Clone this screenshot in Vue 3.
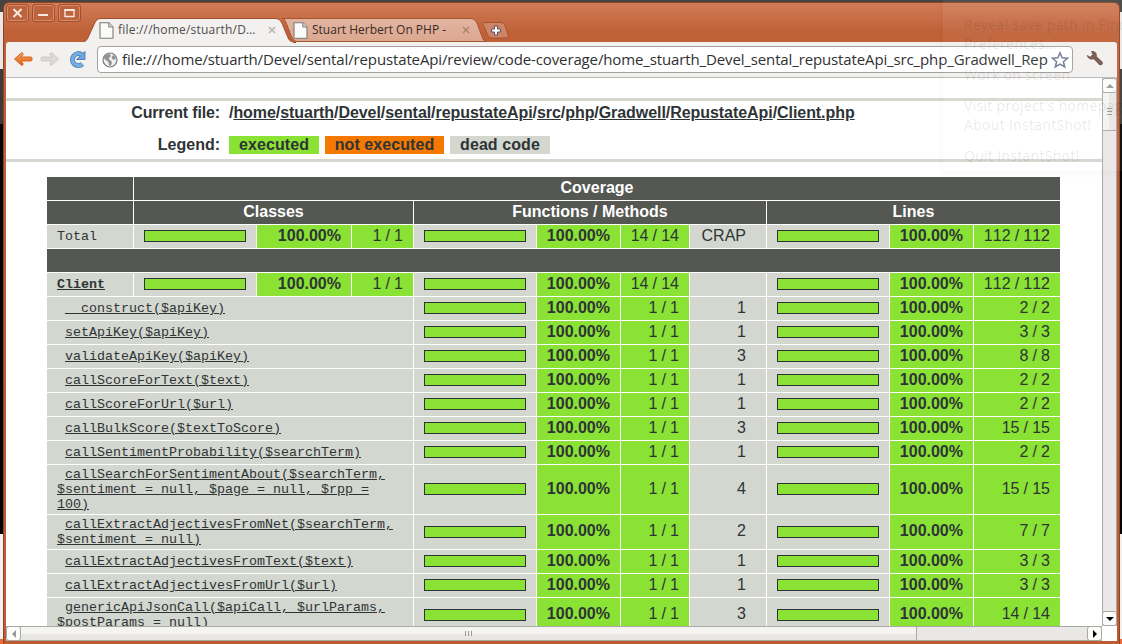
<script setup>
const pct = '100.00%'
const files = ['home', 'stuarth', 'Devel', 'sental', 'repustateApi', 'src', 'php', 'Gradwell', 'RepustateApi', 'Client.php']
const totals = [
  { name: 'Total', link: false, crap: 'CRAP' },
  { name: 'Client', link: true, crap: '' },
]
const methods = [
  { name: '__construct($apiKey)', crap: 1, lines: '2 / 2' },
  { name: 'setApiKey($apiKey)', crap: 1, lines: '3 / 3' },
  { name: 'validateApiKey($apiKey)', crap: 3, lines: '8 / 8' },
  { name: 'callScoreForText($text)', crap: 1, lines: '2 / 2' },
  { name: 'callScoreForUrl($url)', crap: 1, lines: '2 / 2' },
  { name: 'callBulkScore($textToScore)', crap: 3, lines: '15 / 15' },
  { name: 'callSentimentProbability($searchTerm)', crap: 1, lines: '2 / 2' },
  { name: 'callSearchForSentimentAbout($searchTerm,\n$sentiment = null, $page = null, $rpp =\n100)', crap: 4, lines: '15 / 15', size: 'three' },
  { name: 'callExtractAdjectivesFromNet($searchTerm,\n$sentiment = null)', crap: 2, lines: '7 / 7', size: 'two' },
  { name: 'callExtractAdjectivesFromText($text)', crap: 1, lines: '3 / 3' },
  { name: 'callExtractAdjectivesFromUrl($url)', crap: 1, lines: '3 / 3' },
  { name: 'genericApiJsonCall($apiCall, $urlParams,\n$postParams = null)', crap: 3, lines: '14 / 14', size: 'two' },
]
const raised = (m) => ({ raised: m.size === 'two' })
</script>

<template>
  <div class="desktop">
    <div class="window">
      <header class="titlebar">
        <div class="winbtns">
          <span class="wb"><svg width="21" height="16" viewBox="0 0 21 16"><path d="M6.500 4l8 8M14.500 4l-8 8" stroke="#f7e6dc" stroke-width="2" fill="none" /></svg></span>
          <span class="wb"><svg width="21" height="16" viewBox="0 0 21 16"><path d="M5 10h10" stroke="#f7e6dc" stroke-width="2" fill="none" /></svg></span>
          <span class="wb"><svg width="21" height="16" viewBox="0 0 21 16"><path d="M6 5h9v6.500H6z" stroke="#f7e6dc" stroke-width="1.400" fill="none" /><path d="M5.500 5h10" stroke="#f7e6dc" stroke-width="2" /></svg></span>
        </div>
        <svg class="tabshapes" width="440" height="26" viewBox="80 17 440 26">
          <defs><linearGradient id="it" x1="0" y1="0" x2="0" y2="1"><stop offset="0" stop-color="#e2b5a1" /><stop offset="1" stop-color="#dca78f" /></linearGradient></defs>
          <path d="M281 18.500H469c4 0 6 2 7.500 6l4.500 12c1 3 2.500 5 4 5H297c-4 0-5-2-7-6l-5-13c-1-2.500-2-4-4-4z" fill="url(#it)" stroke="#a4552f" />
          <path d="M484 22.500h16c2 0 3.500 1 4 3l3 9c.6 2-.5 3.500-2.500 3.500h-13c-2.500 0-4-1-5-3.500l-4-9c-.7-1.800 0-3 1.500-3z" fill="#cd8566" stroke="#a35331" />
          <path d="M493.500 26h3v3h3v3h-3v3h-3v-3h-3v-3h3z" fill="#fff" stroke="#595064" />
          <path d="M80 42.500c4 0 6-2 8-7l5-11c2-4.500 4-6 7-6h173c5 0 7 2 8.500 6l5 12c1.500 4 3.500 6 8.500 6z" fill="#f2f1ef" stroke="#9c4e2c" />
          <path d="M80 42h212v1H80z" fill="#f2f1ef" />
        </svg>
        <div class="tab first">
          <svg width="15" height="17" viewBox="0 0 15 17"><path d="M1 .8h9l4 4.200v11.200H1z" fill="#fbfbfa" stroke="#7c7c79" stroke-width="1.100" /><path d="M9.800.8V5H14" fill="#ddd" stroke="#7c7c79" /></svg>
          <span class="ttl">file:///home/stuarth/D…</span>
          <svg class="x" width="8" height="8" viewBox="0 0 8 8"><path d="M1 1l6 6M7 1L1 7" stroke="#b5b4b2" stroke-width="1.500" /></svg>
        </div>
        <div class="tab second">
          <svg width="15" height="17" viewBox="0 0 15 17"><path d="M1 .8h9l4 4.200v11.200H1z" fill="#fbfbfa" stroke="#7c7c79" stroke-width="1.100" /><path d="M9.800.8V5H14" fill="#ddd" stroke="#7c7c79" /></svg>
          <span class="ttl">Stuart Herbert On PHP -</span>
          <svg class="x" width="8" height="8" viewBox="0 0 8 8"><path d="M1 1l6 6M7 1L1 7" stroke="#b08570" stroke-width="1.500" /></svg>
        </div>
      </header>

      <div class="toolbar">
        <svg class="nav" width="84" height="20" viewBox="12 49 84 20">
          <defs><linearGradient id="og" x1="0" y1="0" x2="0" y2="1"><stop offset="0" stop-color="#f5a45c" /><stop offset="1" stop-color="#df5f16" /></linearGradient></defs>
          <path d="M14.500 59l7-6.300c1 0 2 .8 1.500 1.800l-2 2.500h10c1.500 0 1.500 4 0 4H21l2 2.500c.5 1-.5 2-1.500 1.800z" fill="url(#og)" stroke="#d5661f" />
          <path d="M58.500 59l-7-6.300c-1 0-2 .8-1.500 1.800l2 2.500H42c-1.500 0-1.500 4 0 4h10l-2 2.500c-.5 1 .5 2 1.500 1.800z" fill="#dcdad6" stroke="#cbc9c5" />
          <path d="M82 54.800A6 6 0 1 0 82.500 64" fill="none" stroke="#4c84bd" stroke-width="5" />
          <path d="M85 51.500v8h-8.500z" fill="#6ca6dc" stroke="#4c84bd" />
          <path d="M82 54.800A6 6 0 1 0 82.500 64" fill="none" stroke="#75ade1" stroke-width="3.200" />
        </svg>
        <div class="omnibox">
          <svg class="globe" width="16" height="16" viewBox="0 0 16 16"><circle cx="8" cy="8" r="7" fill="#f1f1f0" stroke="#777" stroke-width="1.200" /><path d="M3 3.500L7.500 1.800 9 4 6.500 6.500 8 8l2 2-1.200 4-2-1L6.500 10 3 7.500 1.800 6z M10.500 3.500l2 .2 1.500 3-2.500 1.300-2-2z" fill="#929292" /></svg>
          <span class="url">file:///home/stuarth/Devel/sental/repustateApi/review/code-coverage/home_stuarth_Devel_sental_repustateApi_src_php_Gradwell_Rep</span>
          <svg class="star" width="18" height="18" viewBox="0 0 18 18"><path d="M9 1.800l2.100 5 5.400.4-4.100 3.500 1.300 5.300L9 13.100 4.300 16l1.300-5.300-4.100-3.500 5.400-.4z" fill="#fff" stroke="#727a94" stroke-width="1.500" /></svg>
        </div>
        <svg class="wrench" width="18" height="18" viewBox="0 0 18 18"><path d="M5 1.200C8 .3 11.500 2.500 10.800 6.400l5.700 5.400c1.300 2-.9 4.500-3.200 3.200L7.800 9.300C4.500 10.500 1 8.200.8 4.800l3.200 2 2.500-2.300z" fill="#75574b" /></svg>
      </div>

      <div class="view">
        <div class="page">
          <section class="info">
            <div class="line"><b class="lab">Current file:</b><b class="path"><template v-for="f in files" :key="f">/<a>{{ f }}</a></template></b></div>
            <div class="line second-line"><b class="lab">Legend:</b><b class="chip exec">executed</b><b class="chip not">not executed</b><b class="chip dead">dead code</b></div>
          </section>

          <div class="grid">
            <div class="h"></div><div class="h c10">Coverage</div>
            <div class="h"></div><div class="h c3">Classes</div><div class="h c4">Functions / Methods</div><div class="h c3">Lines</div>
            <template v-for="(t, i) in totals" :key="t.name">
              <div class="n"><a v-if="t.link" class="strong">{{ t.name }}</a><template v-else>{{ t.name }}</template></div>
              <div class="b"><i></i></div><div class="p">{{ pct }}</div><div class="r">1 / 1</div>
              <div class="b"><i></i></div><div class="p">{{ pct }}</div><div class="r">14 / 14</div><div class="c">{{ t.crap }}</div>
              <div class="b"><i></i></div><div class="p">{{ pct }}</div><div class="r">112 / 112</div>
              <div v-if="i === 0" class="h c11"></div>
            </template>
            <template v-for="m in methods" :key="m.name">
              <div class="n c4" :class="m.size"><span class="m"><a>{{ m.name }}</a></span></div>
              <div class="b"><i></i></div><div class="p" :class="raised(m)">{{ pct }}</div><div class="r" :class="raised(m)">1 / 1</div><div class="c" :class="raised(m)">{{ m.crap }}</div>
              <div class="b"><i></i></div><div class="p" :class="raised(m)">{{ pct }}</div><div class="r" :class="raised(m)">{{ m.lines }}</div>
            </template>
          </div>
        </div>

        <div class="vbar">
          <span class="btn"><svg width="8" height="4"><path d="M0 4l4-4 4 4z" fill="#999" /></svg></span>
          <span class="vthumb"><i></i><i></i><i></i></span>
          <span class="btn end"><svg width="8" height="4"><path d="M0 0h8L4 4z" fill="#000" /></svg></span>
        </div>
        <div class="hbar">
          <span class="btn"><svg width="4" height="8"><path d="M4 0v8L0 4z" fill="#999" /></svg></span>
          <span class="hthumb"><i></i><i></i><i></i></span>
          <span class="btn end"><svg width="4" height="8"><path d="M0 0v8l4-4z" fill="#000" /></svg></span>
        </div>
      </div>
    </div>

    <div class="ghost">
      <span>Reveal save path in Finder</span>
      <span>Preferences...</span>
      <span class="g1">Work on screen</span>
      <span class="g1">Visit project's homepage</span>
      <span>About InstantShot!</span>
      <span class="g1">Quit InstantShot!</span>
    </div>
  </div>
</template>

<style>
html, body { margin: 0; overflow: hidden; background: #3c3b37; }
</style>

<style scoped>
* { box-sizing: border-box; }
.desktop { position: relative; width: 1122px; height: 644px; padding: 2px 2px 0 3px; overflow: hidden; background: linear-gradient(#454441 0 12px, #e9e8e6 12px 69px, #3c3b37 69px 124px, #050505 124px 534px, #f2f0ee 534px 639px, #ec6b3b 639px); font-family: "Liberation Sans", Arial, sans-serif; color: #2e3436; }
.window { display: flex; flex-direction: column; width: 1117px; height: 642px; padding: 0 2px 3px 3px; border: 1px solid #8b4426; border-width: 1px 1px 0; border-radius: 6px 6px 0 0; background: linear-gradient(#d07c57, #bf6037 30px, #bd5c33); }
.titlebar { position: relative; display: flex; height: 39px; flex: none; }
.winbtns { display: flex; gap: 3px; margin: 1px 0 0 -1px; height: 18px; }
.wb { display: flex; width: 23px; height: 18px; border: 1px solid #a74f2b; border-radius: 3px; background: #bd633d; box-shadow: inset 0 0 0 1px #d58c6b; }
.tabshapes { position: absolute; left: 74px; top: 14px; }
.tab { position: absolute; top: 18px; height: 18px; display: flex; align-items: center; font-family: "Open Sans", sans-serif; font-size: 12px; color: #4c4c4c; }
.first { left: 92px; width: 177px; }
.first .ttl { letter-spacing: .2px; }
.second { left: 286px; width: 177px; color: #3a2a24; }
.ttl { margin-left: 4px; white-space: nowrap; line-height: 18px; }
.x { margin-left: auto; }
.toolbar { display: flex; height: 36px; flex: none; background: #f2f1ef; border-bottom: 1px solid #b9b8b6; padding: 4px 0 0 6px; margin-left: -1px; border-radius: 3px 3px 0 0; }
.nav { margin-top: 3px; flex: none; }
.omnibox { display: flex; align-items: center; width: 976px; height: 27px; margin-left: 1px; border: 1px solid #a3a19e; border-radius: 4px; background: #fff; padding: 0 2px 0 4px; flex: none; }
.globe { flex: none; }
.url { font-family: "Open Sans", sans-serif; font-size: 15px; line-height: 20px; letter-spacing: -.13px; margin: -1px 0 0 4px; white-space: nowrap; width: 929px; flex: none; color: #303030; }
.star { flex: none; }
.wrench { margin: 4px 0 0 13px; }
.view { display: grid; grid-template: minmax(0, 1fr) 15px / minmax(0, 1fr) 15px; flex: 1; min-height: 0; margin-left: -1px; background: #fff; }
.page { overflow: hidden; padding-top: 20px; }
.info { height: 64px; border: 3px solid #d3d7cf; border-width: 3px 0; padding-top: 3px; font-size: 16px; line-height: 17px; }
.line { display: flex; height: 18px; letter-spacing: -.06px; }
.second-line { margin-top: 14px; letter-spacing: 0; }
.lab { width: 214px; margin-right: 9px; text-align: right; }
.line:first-child .lab { letter-spacing: -.15px; }
a { text-decoration: underline; }
.chip { height: 18px; text-align: center; margin-right: 6px; letter-spacing: .08px; }
.exec { width: 90px; background: #8ae234; }
.not { width: 119px; background: #f57900; }
.dead { width: 100px; background: #d3d7cf; }
.grid { display: grid; grid-template-columns: 86px 122px 94px 61px 122px 83px 68px 76px 122px 83px 86px; grid-auto-rows: min-content; gap: 1px; width: 1013px; margin: 15px 0 0 41px; font-size: 16px; line-height: 21px; }
.grid > div { min-height: 23px; }
.grid > .two { min-height: 34px; }
.grid > .three { min-height: 49px; }
.h { background: #555753; color: #fff; font-weight: bold; text-align: center; }
.c3 { grid-column: span 3; }
.c4 { grid-column: span 4; }
.c10 { grid-column: span 10; }
.c11 { grid-column: span 11; }
.n { background: #d3d7cf; display: flex; align-items: center; padding: 0 10px; font: 13.333px/15px "Liberation Mono", monospace; white-space: pre; }
.m { text-indent: 8px; }
.strong { font-weight: bold; }
.b { background: #d3d7cf; display: flex; align-items: center; padding: 0 10px 1px; }
.b i { width: 102px; height: 12px; border: 1px solid #2e3436; background: #8ae234; }
.p, .r, .c { display: flex; align-items: center; justify-content: flex-end; padding: 0 10px 2px 0; background: #8ae234; font-kerning: none; }
.p { font-weight: bold; }
.r { word-spacing: -.3px; }
.c { background: #d3d7cf; padding-right: 20px; }
.raised { padding-bottom: 4px; }
.btn { width: 15px; height: 15px; display: flex; align-items: center; justify-content: center; border: 1px solid #aaa8a5; border-radius: 3px; background: #fcfcfb; flex: none; }
.end { margin-top: auto; }
.vbar { display: flex; flex-direction: column; background: #e9e8e6; border: 1px solid #aaa8a5; border-width: 0 1px; }
.vbar .btn { margin-left: -1px; }
.vthumb { height: 38px; border-bottom: 1px solid #aaa8a5; background: linear-gradient(90deg, #f5f4f2 50%, #e8e7e5 50%); display: flex; flex-direction: column; align-items: center; justify-content: center; gap: 2px; }
.vthumb i { width: 5px; height: 1px; background: #999; }
.hbar { display: flex; background: #e9e8e6; border: 1px solid #aaa8a5; border-width: 1px 0; align-items: center; }
.hthumb { width: 896px; height: 13px; border-right: 1px solid #aaa8a5; background: linear-gradient(#f5f4f2 50%, #e8e7e5 50%); display: flex; align-items: center; justify-content: center; gap: 2px; }
.hthumb i { width: 1px; height: 5px; background: #999; }
.hbar .end { margin: 0 0 0 auto; }
.ghost { position: absolute; left: 943px; top: 0; width: 179px; height: 171px; padding: 15px 0 0 21px; display: flex; flex-direction: column; background: rgba(255,255,255,.06); box-shadow: 0 2px 8px rgba(0,0,0,.035); font: 14px/19px "Open Sans", sans-serif; letter-spacing: .3px; color: rgba(0,0,0,.1); white-space: nowrap; overflow: hidden; pointer-events: none; }
.g1 { margin-top: 12px; }
</style>
